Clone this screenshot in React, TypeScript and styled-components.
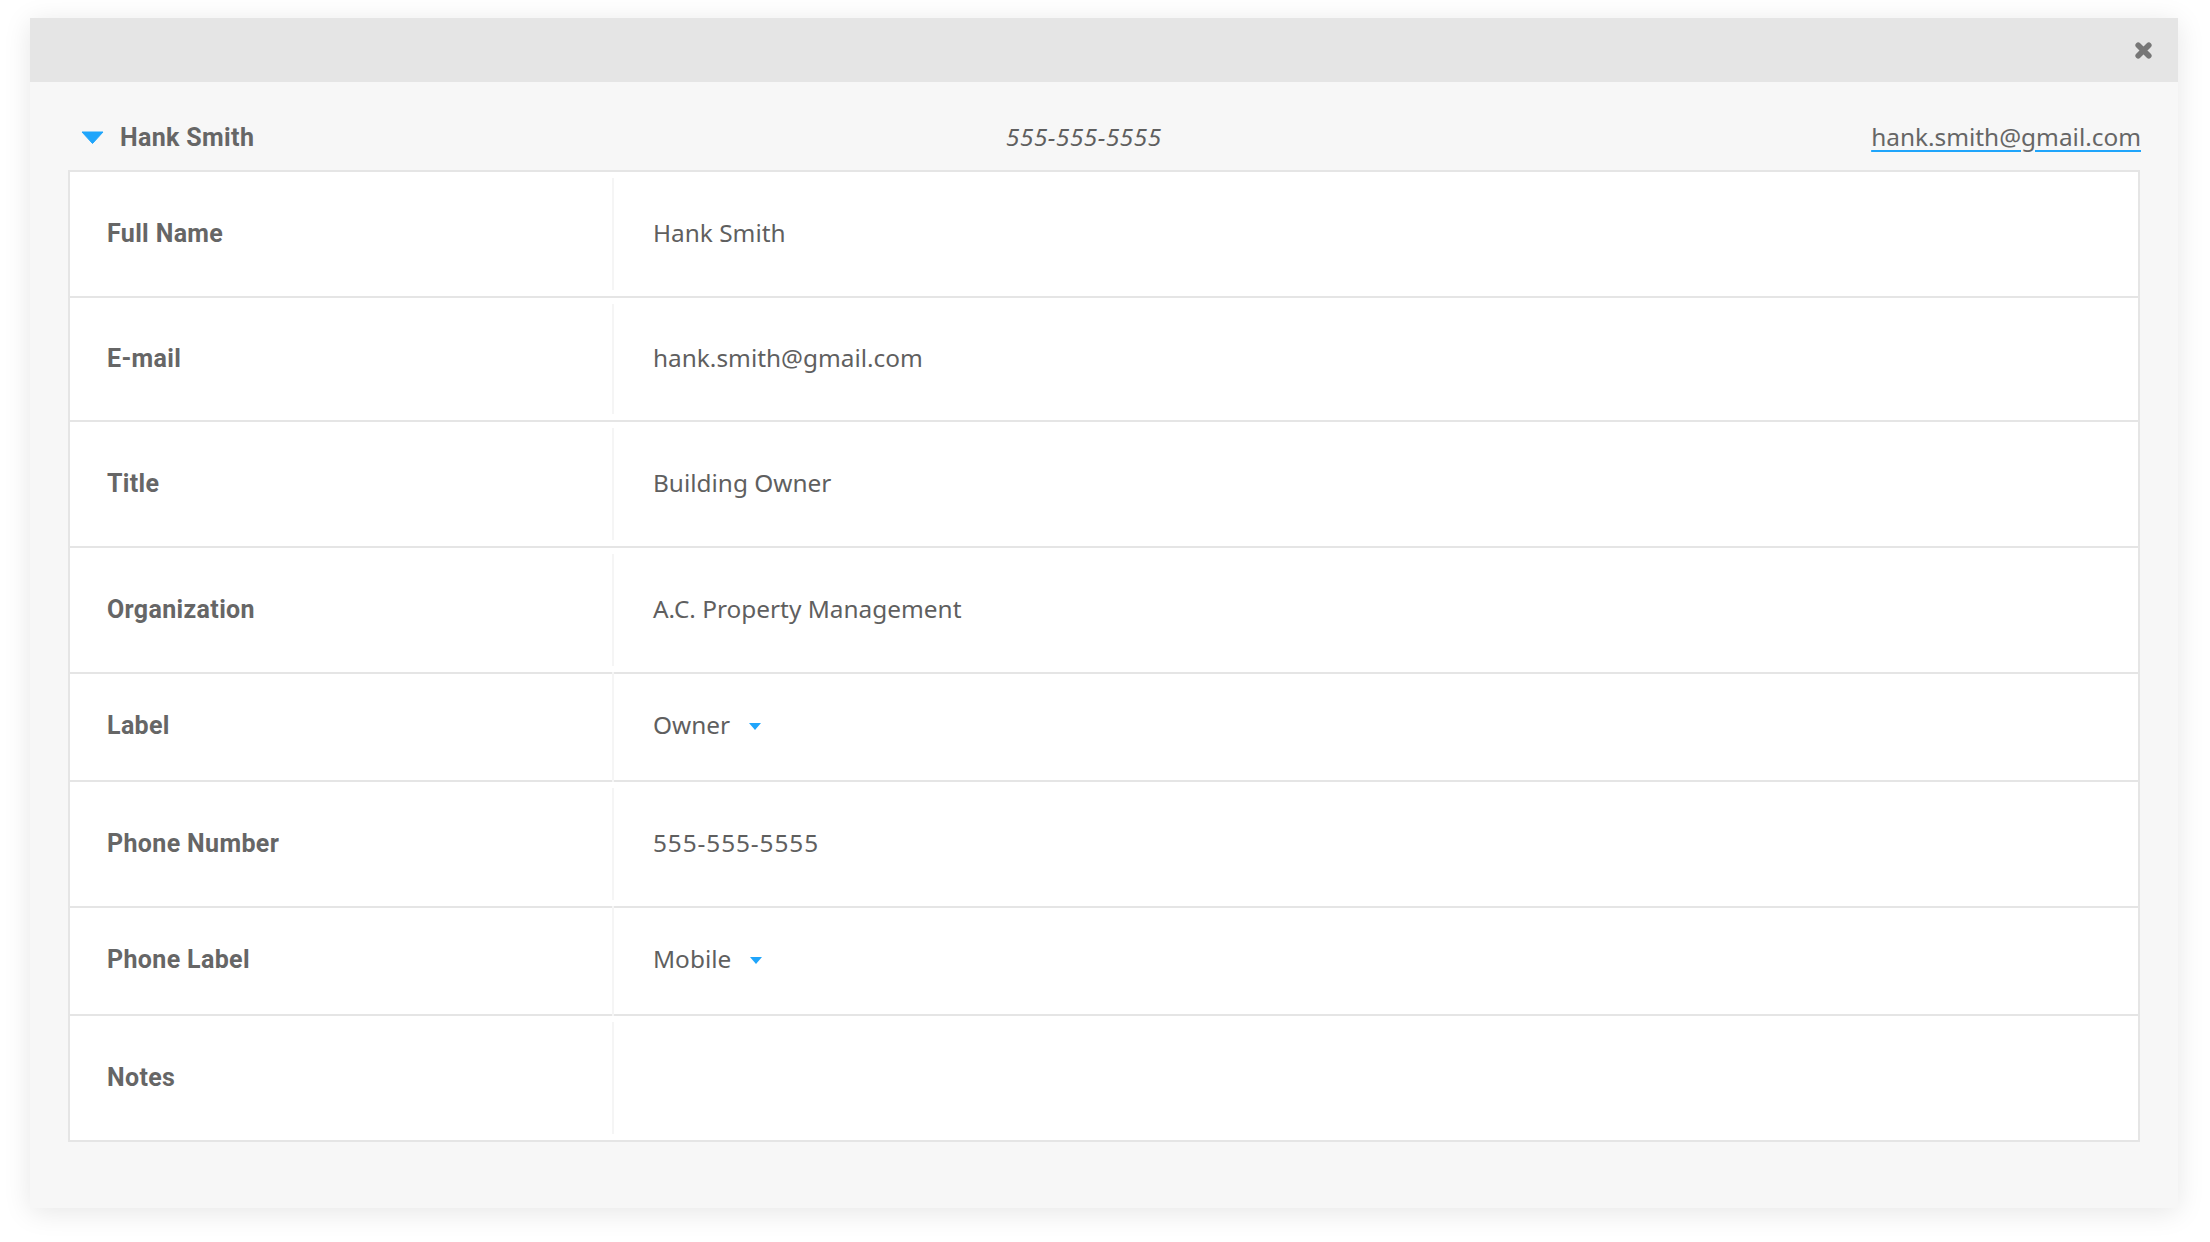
import React from 'react';
import styled, { createGlobalStyle } from 'styled-components';

const GlobalStyle = createGlobalStyle`
  html, body {
    margin: 0;
    background: #fff;
  }
  body {
    font-family: "Noto Sans", "Open Sans", sans-serif;
    color: #5f5f5f;
  }
`;

const rows = [
  { label: 'Full Name', value: 'Hank Smith', height: 126 },
  { label: 'E-mail', value: 'hank.smith@gmail.com', height: 124 },
  { label: 'Title', value: 'Building Owner', height: 126 },
  { label: 'Organization', value: 'A.C. Property Management', height: 126 },
  { label: 'Label', value: 'Owner', height: 108, select: true },
  { label: 'Phone Number', value: '555-555-5555', height: 126, numeric: true },
  { label: 'Phone Label', value: 'Mobile', height: 108, select: true },
  { label: 'Notes', value: '', height: 124, last: true },
];

const App: React.FC = () => {
  return (
    <Page>
      <GlobalStyle />
      <Panel>
        <TopBar>
          <svg width="17" height="17" viewBox="0 0 17 17">
            <path d="M3.2 3.2 L13.8 13.8 M13.8 3.2 L3.2 13.8" stroke="#777" strokeWidth="5.6" strokeLinecap="round" />
          </svg>
        </TopBar>
        <Body>
          <ContactRow>
            <ContactName>
              <svg width="23" height="13" viewBox="0 0 23 13">
                <path d="M1 1 H22 L11.5 12.5 Z" fill="#1fa5fb" stroke="#1fa5fb" strokeWidth="1" strokeLinejoin="round" />
              </svg>
              <NameText>Hank Smith</NameText>
            </ContactName>
            <ContactPhone>555-555-5555</ContactPhone>
            <ContactEmail href="#">hank.smith@gmail.com</ContactEmail>
          </ContactRow>
          <Table>
            {rows.map((row) => (
              <Row key={row.label} $height={row.height} $last={row.last} $select={row.select}>
                <LabelCell $select={row.select}>{row.label}</LabelCell>
                <ValueCell $select={row.select} $numeric={row.numeric}>
                  {row.value}
                  {row.select && (
                    <Caret width="12" height="7" viewBox="0 0 12 7">
                      <path d="M0 0 H12 L6 7 Z" fill="#1fa5fb" />
                    </Caret>
                  )}
                </ValueCell>
              </Row>
            ))}
          </Table>
        </Body>
      </Panel>
    </Page>
  );
};

const Page = styled.div`
  padding: 18px 32px 34px 30px;
`;

const Panel = styled.div`
  background: #f7f7f7;
  height: 1190px;
  border-radius: 2px;
  box-shadow: 0 4px 28px rgba(0, 0, 0, 0.1);
`;

const TopBar = styled.div`
  height: 64px;
  background: #e5e5e5;
  display: flex;
  align-items: center;
  justify-content: flex-end;
  padding-right: 26px;
`;

const Body = styled.div`
  padding: 0 38px;
`;

const ContactRow = styled.div`
  height: 88px;
  box-sizing: border-box;
  display: flex;
  align-items: center;
  padding-top: 22px;
  margin-right: -1px;
`;

const ContactName = styled.div`
  width: 938px;
  padding-left: 13px;
  box-sizing: border-box;
  display: flex;
  align-items: center;
  gap: 16px;
`;

const NameText = styled.span`
  font-family: Roboto, "Noto Sans", sans-serif;
  font-size: 25px;
  font-weight: 700;
  letter-spacing: 0.35px;
  color: #666;
`;

const ContactPhone = styled.span`
  font-size: 24.4px;
  font-style: italic;
  letter-spacing: 0.5px;
  margin-bottom: 2px;
`;

const ContactEmail = styled.a`
  margin-left: auto;
  margin-bottom: 2px;
  font-size: 24.4px;
  color: #666;
  text-decoration: underline;
  text-decoration-color: #1fa5fb;
  text-decoration-thickness: 2px;
  text-underline-offset: 4px;
`;

const Table = styled.div`
  background: #fff;
  border: 2px solid #e5e5e5;
`;

const Row = styled.div<{ $height: number; $last?: boolean; $select?: boolean }>`
  display: grid;
  grid-template-columns: 542px 1fr;
  height: ${(p) => p.$height}px;
  box-sizing: border-box;
  padding: ${(p) => (p.$select ? '0' : '6px 0')};
  border-bottom: ${(p) => (p.$last ? 'none' : '2px solid #e5e5e5')};
`;

const LabelCell = styled.div<{ $select?: boolean }>`
  display: flex;
  align-items: center;
  padding-left: 37px;
  padding-bottom: ${(p) => (p.$select ? '3px' : '1px')};
  font-family: Roboto, "Noto Sans", sans-serif;
  font-size: 25px;
  font-weight: 700;
  letter-spacing: 0.35px;
  color: #666;
`;

const ValueCell = styled.div<{ $select?: boolean; $numeric?: boolean }>`
  display: flex;
  align-items: center;
  padding-left: 39px;
  padding-bottom: ${(p) => (p.$select ? '5px' : '4px')};
  font-size: 24.4px;
  letter-spacing: ${(p) => (p.$numeric ? '0.9px' : 'normal')};
  border-left: 2px solid #f5f5f5;
  margin: ${(p) => (p.$select ? '-2px 0' : '0')};
`;

const Caret = styled.svg`
  margin-left: 19px;
  margin-top: 4px;
`;

export default App;
